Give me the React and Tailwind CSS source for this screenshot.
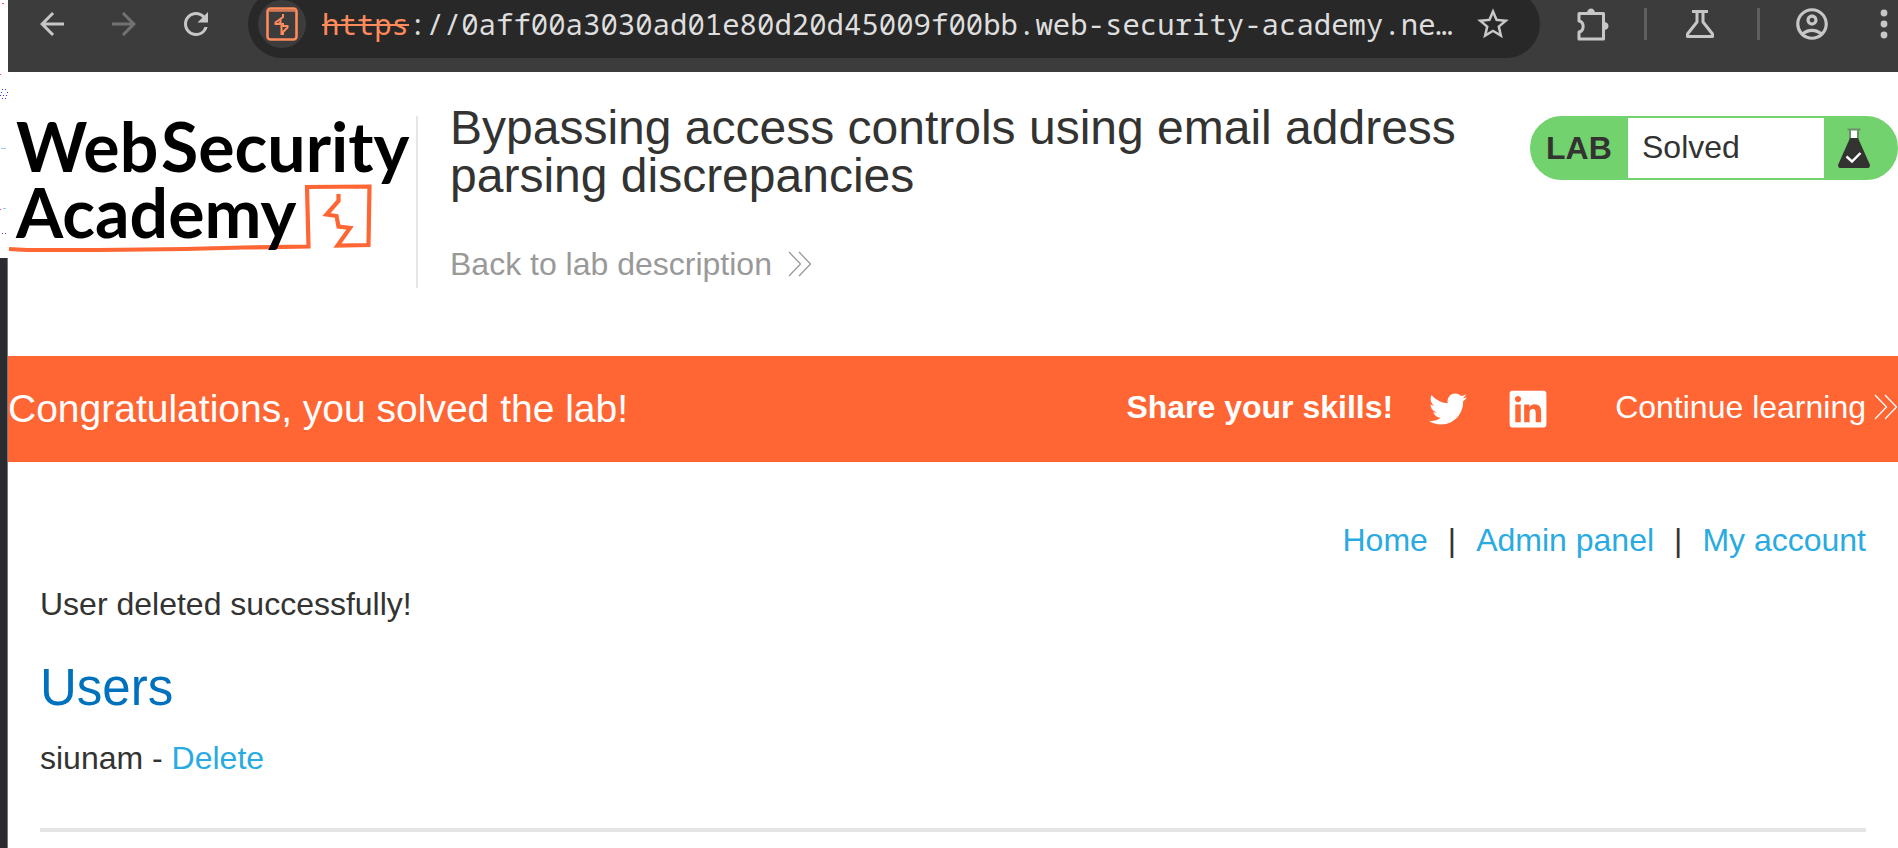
import { MdArrowBack, MdArrowForward, MdRefresh, MdStarBorder, MdOutlineAccountCircle } from 'react-icons/md';
import { FaTwitter, FaLinkedin } from 'react-icons/fa';

function SiteBadge() {
  return (
    <svg width="32" height="34" viewBox="0 0 32 34" fill="none" aria-hidden="true">
      <rect x="1.5" y="1.5" width="29" height="31" rx="3" stroke="#ff8a5c" strokeWidth="2.6" />
      <path d="M2.5 3.5H29.5" stroke="#d07a58" strokeWidth="2.6" />
      <path d="M17 7V10L9.5 15.500V17H17V19L21.500 19V20.500L17 25V27H15.500V18" stroke="#ff8a5c" strokeWidth="2" />
      <path d="M15.500 11V17H12Z" fill="#ff8a5c" />
    </svg>
  );
}

function PuzzleIcon() {
  return (
    <svg width="34" height="34" viewBox="0 0 34 34" fill="none" aria-hidden="true">
      <path
        d="M3 6.5H27.5V32H3V25C8.5 24 8.5 15 3 14Z"
        stroke="#c7c7c7"
        strokeWidth="3"
        strokeLinejoin="round"
      />
      <path d="M11 6C11 0 19 0 19 6Z" fill="#c7c7c7" />
      <path d="M28 15C34 15 34 23 28 23Z" fill="#c7c7c7" />
    </svg>
  );
}

function BeakerIcon() {
  return (
    <svg width="30" height="30" viewBox="0 0 30 30" fill="none" aria-hidden="true">
      <path d="M7 2.5H23M12 3V13L2.5 25V27.5H27.5V25L18 13V3" stroke="#c7c7c7" strokeWidth="3" strokeLinejoin="round" />
    </svg>
  );
}

function DotsIcon() {
  return (
    <svg width="8" height="30" viewBox="0 0 8 30" fill="#c7c7c7" aria-hidden="true">
      <circle cx="4" cy="4" r="3.4" />
      <circle cx="4" cy="15" r="3.4" />
      <circle cx="4" cy="26" r="3.4" />
    </svg>
  );
}

function Chevrons() {
  return (
    <svg width="24" height="26" viewBox="0 0 24 26" fill="none" stroke="currentColor" strokeWidth="1.3" aria-hidden="true">
      <path d="M1 1L12.5 13L1 25M11 1L22.5 13L11 25" />
    </svg>
  );
}

function Logo() {
  return (
    <svg width="408" height="150" viewBox="0 0 408 150" fill="none" role="img" aria-label="Web Security Academy">
      <path
        d="M1 133L19 134L90 134L177 133L235 131.5L300.5 130.5L299 71L361.5 70.5L360.5 129L329.5 129.5L342 112L330.5 110.5L328.5 100L318.5 98.5L330.5 85V78"
        stroke="#ff6633"
        strokeWidth="4.2"
      />
      <g fill="#000" fontSize="68" className="font-['Lato',sans-serif] font-bold">
        <text x="8" y="56">Web</text>
        <text x="153" y="56">Security</text>
        <text x="8" y="122">Academy</text>
      </g>
    </svg>
  );
}

function LabFlask() {
  return (
    <svg width="32" height="40" viewBox="0 0 32 40" fill="none" aria-hidden="true">
      <path d="M12 2H20V11H12Z" fill="#fff" />
      <path d="M9.5 1.5H22.5M12 2V11M20 2V11" stroke="#6b8f68" strokeWidth="2" />
      <path d="M12 10H20L32 37C32 39 31 40 30 40H2C1 40 0 39 0 37Z" fill="#333332" />
      <path d="M8.5 28.5L14 33.5L22.5 25" stroke="#fff" strokeWidth="2.4" />
    </svg>
  );
}

function WindowEdge() {
  return (
    <div className="flex w-2 shrink-0 flex-col" aria-hidden="true">
      <svg width="8" height="258" viewBox="0 0 8 258" fill="#3333ff">
        <path d="M2 89h1v1h-1zM5 89h1v1h-1zM1 92h1v1h-1zM7 92h1v1h-1zM0 95h1v1h-1zM3 95h1v1h-1zM6 95h1v1h-1zM2 98h1v1h-1zM5 98h1v1h-1zM2 233h1v1h-1zM5 233h1v1h-1z" />
        <path d="M1 148h5v1h-5zM3 208h3v1h-3z" fill="#8fd0ff" />
        <path d="M0 74h1v1h-1zM0 209h1v1h-1zM2 3h2v1h-2z" fill="#ff4060" />
      </svg>
      <div className="flex-1 border-r border-[#777] bg-[#2b2c30]" />
    </div>
  );
}

export default function App() {
  return (
    <div className="flex min-h-screen overflow-hidden bg-white font-['Liberation_Sans',Arial,sans-serif] text-[32px] leading-10 text-[#333332]">
      <WindowEdge />
      <div className="min-w-0 flex-1">
        <div className="flex h-[72px] items-center overflow-hidden bg-[#3c3c3c] pr-2.5 pb-6 pl-[26px] text-[#c7c7c7]">
          <div className="flex gap-9">
            <button type="button" aria-label="Back"><MdArrowBack size={36} /></button>
            <button type="button" aria-label="Forward" className="text-[#727272]"><MdArrowForward size={36} /></button>
            <button type="button" aria-label="Reload"><MdRefresh size={36} /></button>
          </div>
          <div className="ml-[34px] flex h-[68px] min-w-0 flex-1 items-center rounded-full bg-[#282828] pr-7 pl-2.5 font-['Noto_Sans_Mono','DejaVu_Sans_Mono',monospace] text-[29px] leading-10">
            <button type="button" aria-label="Site information" className="flex size-12 shrink-0 items-center justify-center rounded-full bg-[#3c3c3c]">
              <SiteBadge />
            </button>
            <label htmlFor="address" className="ml-4 text-[#ff8a5c] line-through decoration-2">https</label>
            <input id="address" type="text" className="min-w-0 flex-1 bg-transparent text-[#dedede] outline-none" defaultValue="://0aff00a3030ad01e80d20d45009f00bb.web-security-academy.ne…" />
            <button type="button" aria-label="Bookmark"><MdStarBorder size={38} /></button>
          </div>
          <button type="button" aria-label="Extensions" className="ml-9"><PuzzleIcon /></button>
          <div className="ml-[34px] h-8 w-[3px] bg-[#5f5f5f]" />
          <button type="button" aria-label="Labs" className="ml-[38px]"><BeakerIcon /></button>
          <div className="ml-[42px] h-8 w-[3px] bg-[#5f5f5f]" />
          <button type="button" aria-label="Profile" className="ml-[33px]"><MdOutlineAccountCircle size={38} /></button>
          <button type="button" aria-label="Menu" className="ml-[49px]"><DotsIcon /></button>
        </div>

        <header className="flex items-start pb-[68px]">
          <a href="#academy" className="mt-11 block shrink-0"><Logo /></a>
          <div className="mt-11 h-[172px] w-0.5 shrink-0 bg-[#e5e5e5]" />
          <div className="mt-8 ml-8 min-w-0 flex-1">
            <h2 className="max-w-[1040px] text-[48px] leading-[48px]">Bypassing access controls using email address parsing discrepancies</h2>
            <a href="#lab" className="mt-11 flex items-center gap-4 text-[#999]">
              Back to lab description <Chevrons />
            </a>
          </div>
          <div className="mt-11 flex h-16 shrink-0 overflow-hidden rounded-full border-2 border-[#72d26e] bg-[#72d26e]">
            <span className="flex w-24 items-center pl-3.5 font-bold">LAB</span>
            <p className="flex w-[196px] items-center bg-white pb-0.5 pl-3.5">Solved</p>
            <span className="flex w-[72px] items-center justify-center pr-3"><LabFlask /></span>
          </div>
        </header>

        <section className="flex h-[106px] items-center bg-[#ff6633] text-white">
          <h4 className="text-[39px]">Congratulations, you solved the lab!</h4>
          <div className="ml-auto flex shrink-0 items-center pb-1">
            <span className="font-bold">Share your skills!</span>
            <a href="#twitter" aria-label="Twitter" className="mt-1 ml-9"><FaTwitter size={38} /></a>
            <a href="#linkedin" aria-label="LinkedIn" className="mt-1 ml-10"><FaLinkedin size={42} /></a>
            <a href="#next" className="ml-[66px] flex items-center gap-2">Continue learning <Chevrons /></a>
          </div>
        </section>

        <main className="px-8 pt-[58px]">
          <nav className="flex justify-end gap-5">
            <a href="#home" className="text-[#29abe2]">Home</a>
            <span>|</span>
            <a href="#admin" className="text-[#29abe2]">Admin panel</a>
            <span>|</span>
            <a href="#account" className="text-[#29abe2]">My account</a>
          </nav>
          <p className="mt-6">User deleted successfully!</p>
          <h1 className="mt-[34px] text-[51px] leading-[60px] text-[#0071bc]">Users</h1>
          <p className="mt-5">siunam - <a href="#delete" className="text-[#29abe2]">Delete</a></p>
          <hr className="mt-[50px] border-t-4 border-[#e5e5e5]" />
        </main>
      </div>
    </div>
  );
}
